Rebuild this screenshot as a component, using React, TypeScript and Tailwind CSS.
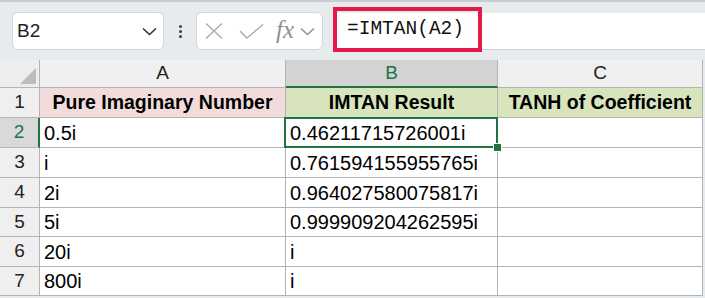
import React from "react";

const rows: [string, string, string][] = [
  ["0.5i", "0.46211715726001i", ""],
  ["i", "0.761594155955765i", ""],
  ["2i", "0.964027580075817i", ""],
  ["5i", "0.999909204262595i", ""],
  ["20i", "i", ""],
  ["800i", "i", ""],
];

const rowHeights = ["h-[30px]", "h-[30px]", "h-[30px]", "h-[29px]", "h-[30px]", "h-[29px]"];

function Chevron({ className }: { className?: string }) {
  return (
    <svg className={className} width="15" height="9" viewBox="0 0 15 9" fill="none">
      <path d="M1 1.5 L7.5 7.5 L14 1.5" stroke="currentColor" strokeWidth="1.6" />
    </svg>
  );
}

export default function App() {
  return (
    <div className="w-[705px] h-[298px] overflow-hidden bg-[#e8ebee] font-['Liberation_Sans',sans-serif] text-black">
      {/* toolbar */}
      <div className="h-[60px] border-t-2 border-[#c8ccd0] flex items-start pt-[10px]">
        <div className="ml-[12px] w-[152px] h-[38px] bg-white border border-[#d3d6da] rounded-[6px] flex items-center pl-[4px] pr-[6px]">
          <span className="text-[19px] text-[#222]">B2</span>
          <Chevron className="ml-auto text-[#333]" />
        </div>
        <div className="w-[32px] h-[38px] flex flex-col items-center justify-center gap-[2px]">
          <span className="w-[3px] h-[3px] rounded-full bg-[#3a3f45]" />
          <span className="w-[3px] h-[3px] rounded-full bg-[#3a3f45]" />
          <span className="w-[3px] h-[3px] rounded-full bg-[#3a3f45]" />
        </div>
        <div className="w-[127px] h-[38px] bg-white border border-[#d3d6da] rounded-[6px] flex items-center pl-[8px]">
          <svg width="18" height="16" viewBox="0 0 18 16" fill="none">
            <path d="M1 0.5 L17 15.5 M17 0.5 L1 15.5" stroke="#a8abaf" strokeWidth="1.4" />
          </svg>
          <svg className="ml-[16px]" width="25" height="15" viewBox="0 0 25 15" fill="none">
            <path d="M1 7 L8 14 L24 0.5" stroke="#a8abaf" strokeWidth="1.4" />
          </svg>
          <span className="ml-[12px] font-['Liberation_Serif',serif] italic text-[25px] leading-none text-[#8e9196] -mt-[3px]">
            fx
          </span>
          <Chevron className="ml-[6px] text-[#8e9196]" />
        </div>
        <div className="ml-[10px] flex-1 h-[37px] mt-[1px] bg-white border-b border-[#cfd3d7] relative">
          <div className="absolute -top-[6px] left-0 w-[149px] h-[45px] border-4 border-[#e11a49] flex items-center pl-[10px]">
            <span className="font-['Liberation_Mono',monospace] text-[19.5px] text-[#111]">=IMTAN(A2)</span>
          </div>
        </div>
      </div>

      {/* grid */}
      <div className="grid grid-cols-[40px_246px_212px_205px] w-[703px]">
        <div className="h-[28px] bg-[#ededed] border-r border-b border-[#b4b4b4] relative">
          <div className="absolute right-[3px] bottom-[3px] w-0 h-0 border-l-[16px] border-l-transparent border-b-[16px] border-b-[#bcbcbc]" />
        </div>
        <div className="h-[28px] bg-[#f0f0f0] border-r border-b border-[#b4b4b4] flex items-center justify-center text-[19px] text-[#222]">
          A
        </div>
        <div className="h-[28px] bg-[#d3d3d3] border-r border-[#b4b4b4] border-b-2 border-b-[#217346] flex items-center justify-center text-[19px] text-[#217346]">
          B
        </div>
        <div className="h-[28px] bg-[#f0f0f0] border-r border-b border-[#b4b4b4] flex items-center justify-center text-[19px] text-[#222]">
          C
        </div>

        {/* row 1 */}
        <div className="h-[30px] bg-[#efefef] border-r border-b border-[#b4b4b4] flex items-center justify-center text-[19px] text-[#222]">
          1
        </div>
        <div className="h-[30px] bg-[#f2dcdb] border-r border-b border-[#b4b4b4] flex items-center justify-center text-[19.5px] font-bold">
          Pure Imaginary Number
        </div>
        <div className="h-[30px] bg-[#d8e4bc] border-r border-b border-[#b4b4b4] flex items-center justify-center text-[19.5px] font-bold">
          IMTAN Result
        </div>
        <div className="h-[30px] bg-[#d8e4bc] border-r border-b border-[#b4b4b4] flex items-center justify-center text-[19.5px] font-bold">
          TANH of Coefficient
        </div>

        {rows.map((r, i) => {
          const h = rowHeights[i];
          const sel = i === 0;
          return (
            <React.Fragment key={i}>
              <div
                className={`${h} border-b border-[#b4b4b4] flex items-center justify-center text-[19px] ${
                  sel
                    ? "bg-[#d9d9d9] text-[#217346] border-r-2 border-r-[#217346]"
                    : "bg-[#efefef] text-[#222] border-r"
                }`}
              >
                {i + 2}
              </div>
              <div className={`${h} bg-white border-r border-b border-[#b4b4b4] flex items-center pl-[4px] text-[20px]`}>
                {r[0]}
              </div>
              <div
                className={`${h} bg-white border-r border-b border-[#b4b4b4] flex items-center pl-[4px] text-[20px] relative ${
                  sel ? "z-10" : ""
                }`}
              >
                {r[1]}
                {sel && (
                  <>
                    <div className="absolute -left-[2px] -top-[1px] -right-[1px] -bottom-[1px] border-[2.5px] border-[#217346]" />
                    <div className="absolute -right-[5px] -bottom-[5px] w-[9px] h-[9px] bg-[#217346] border border-white" />
                  </>
                )}
              </div>
              <div className={`${h} bg-white border-r border-b border-[#b4b4b4] flex items-center pl-[4px] text-[20px]`}>
                {r[2]}
              </div>
            </React.Fragment>
          );
        })}
      </div>
    </div>
  );
}
